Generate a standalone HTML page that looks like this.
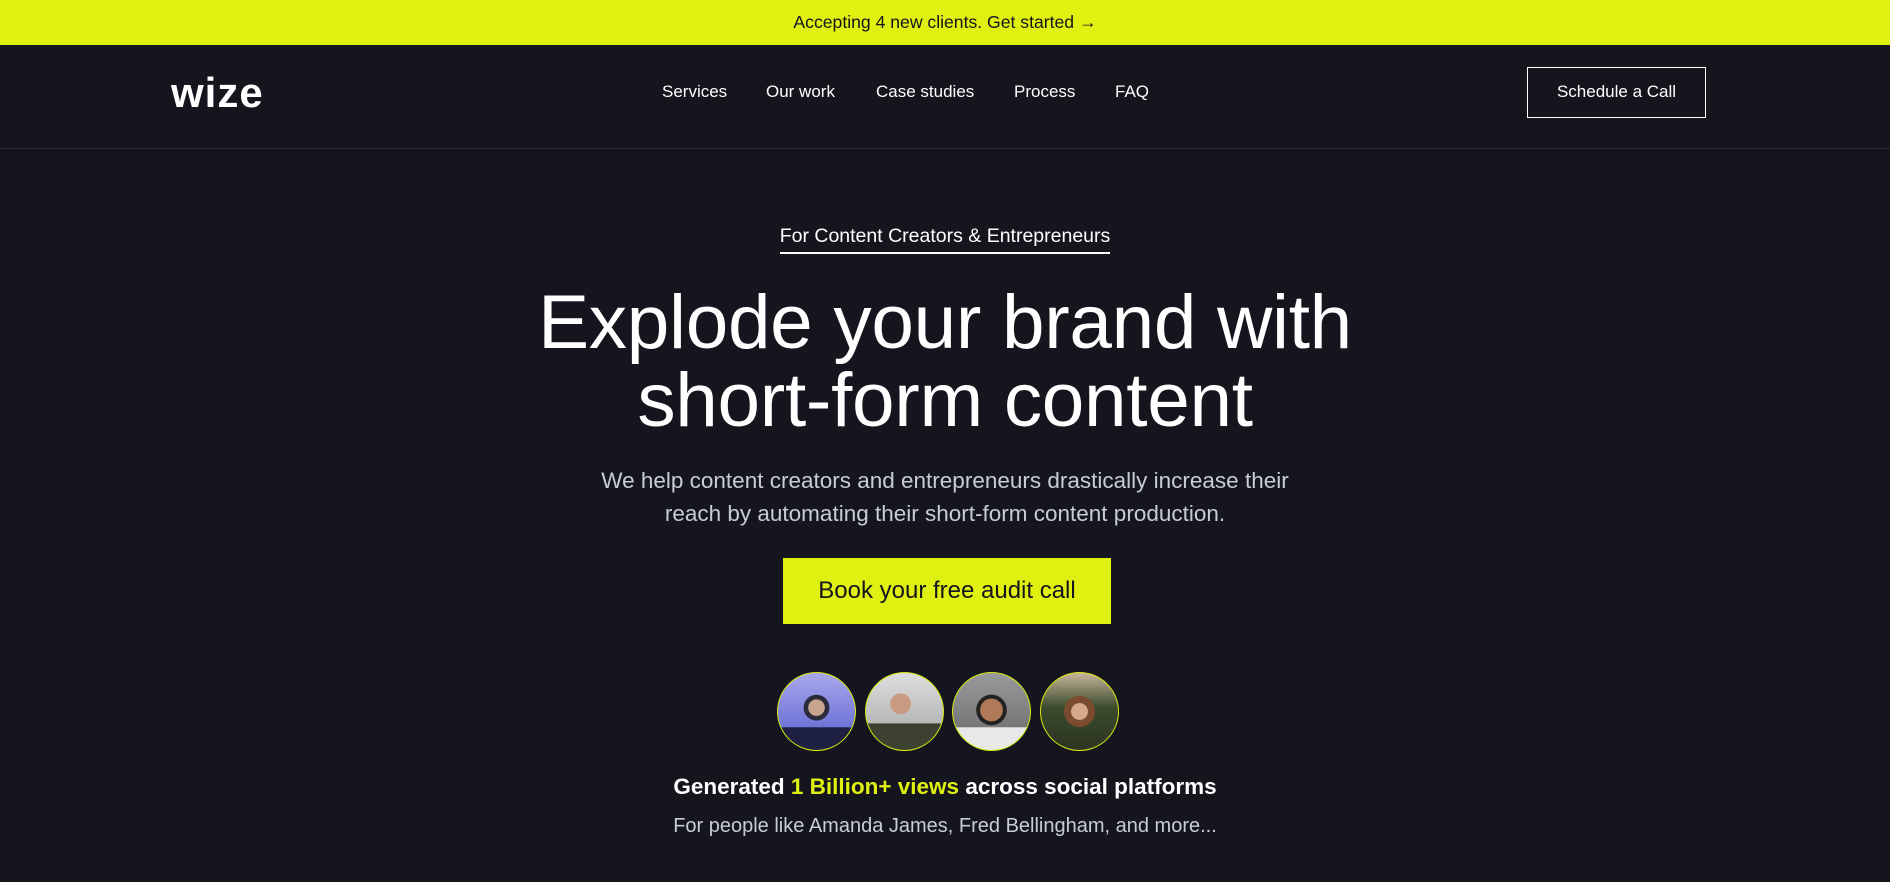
<!DOCTYPE html>
<html><head><meta charset="utf-8"><style>
*{margin:0;padding:0;box-sizing:border-box}
body{width:1890px;height:882px;overflow:hidden;background:#14151d;font-family:"Liberation Sans",sans-serif;color:#fff;position:relative}
.banner{position:absolute;left:0;top:0;width:1890px;height:45px;background:#e0f011;color:#14151d;font-size:17.6px;text-align:center;line-height:45px}
.nav{position:absolute;top:45px;left:0;width:1890px;height:104px;border-bottom:1px solid #2a2b33}
.logo{position:absolute;left:171px;top:24px;font-size:42px;font-weight:bold;letter-spacing:1px}
.links a{position:absolute;top:37px;font-size:17px;color:#fff;text-decoration:none}
.btn{position:absolute;left:1527px;top:22px;width:179px;height:51px;border:1.5px solid #fff;font-size:17px;text-align:center;line-height:48px}
.c{position:absolute;left:0;width:1890px;text-align:center}
.tag{top:225px;font-size:19.5px}
.tag span{border-bottom:2px solid #fff;padding-bottom:5px}
h1{top:284px;font-size:76.5px;font-weight:normal;line-height:78px;letter-spacing:-0.3px}
.p{top:464px;font-size:22.5px;line-height:33px;color:#c9ccd6}
.cta{position:absolute;left:783px;top:558px;width:328px;height:66px;background:#e0f011;color:#14151d;font-size:24px;text-align:center;line-height:66px}
.av{position:absolute;top:672px;width:79px;height:79px;border-radius:50%;border:1.5px solid #d8e80f}
.g{top:774px;font-size:22.5px;font-weight:bold}
.g b{color:#e0f011}
.s{top:815px;font-size:20px;color:#c9ccd6}
</style></head><body>
<div class="banner">Accepting 4 new clients. Get started →</div>
<div class="nav">
<div class="logo">wize</div>
<div class="links"><a style="left:662px">Services</a><a style="left:766px">Our work</a><a style="left:876px">Case studies</a><a style="left:1014px">Process</a><a style="left:1115px">FAQ</a></div>
<div class="btn">Schedule a Call</div>
</div>
<div class="c tag"><span>For Content Creators &amp; Entrepreneurs</span></div>
<h1 class="c">Explode your brand with<br>short-form content</h1>
<div class="c p">We help content creators and entrepreneurs drastically increase their<br>reach by automating their short-form content production.</div>
<div class="cta">Book your free audit call</div>
<div class="av" style="left:777px;background:radial-gradient(circle at 50% 45%,#c9a58e 0 14%,#2a2a3a 15% 22%,transparent 23%),linear-gradient(#a9a8ea,#6f74d8 70%,#1d2040 71%)"></div>
<div class="av" style="left:865px;background:radial-gradient(circle at 45% 40%,#c99a80 0 16%,transparent 17%),linear-gradient(#dedede,#b8b8b8 65%,#3d4230 66%)"></div>
<div class="av" style="left:952px;background:radial-gradient(circle at 50% 48%,#b07a58 0 20%,#222 21% 27%,transparent 28%),linear-gradient(#9a9a9c,#777 70%,#e8e8e8 71%)"></div>
<div class="av" style="left:1040px;background:radial-gradient(circle at 50% 50%,#d7a98c 0 15%,#7a4b2e 16% 28%,transparent 29%),linear-gradient(#c7b59a,#3a4a2c 45%,#2c3522)"></div>
<div class="c g">Generated <b>1 Billion+ views</b> across social platforms</div>
<div class="c s">For people like Amanda James, Fred Bellingham, and more...</div>
</body></html>
